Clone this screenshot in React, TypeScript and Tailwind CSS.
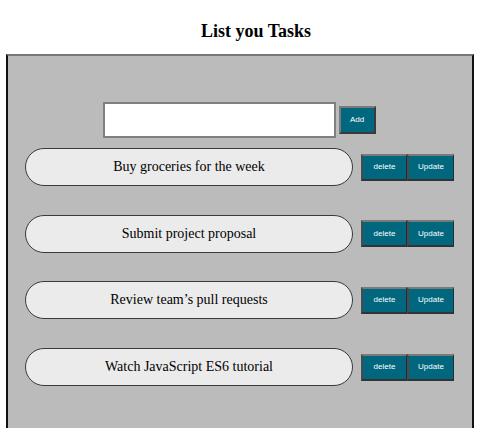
const tasks = [
  'Buy groceries for the week',
  'Submit project proposal',
  "Review team\u2019s pull requests",
  'Watch JavaScript ES6 tutorial',
]

function TaskButton({ label }: { label: string }) {
  return (
    <button className="h-[27px] bg-[#00677e] text-white text-[8px] font-['Liberation_Sans',Arial,sans-serif] border-t-2 border-l-2 border-t-[#7a7a7a] border-l-[#4a4a4a] border-r border-b-2 border-r-[#1f2f33] border-b-[#333333]">
      {label}
    </button>
  )
}

export default function App() {
  return (
    <div className="min-h-screen bg-white font-['Liberation_Serif','Times_New_Roman',serif] text-black">
      {/* Header */}
      <h1 className="pt-[20px] pl-8 h-[54px] text-center text-[18px] font-bold leading-[22px]">
        List you Tasks
      </h1>

      {/* Panel */}
      <div className="mx-[6px] w-[468px] h-[380px] bg-[#bbbbbb] border-t-2 border-t-[#777777] border-x-2 border-x-[#111111]">
        <div className="pt-[46px] flex justify-center items-center gap-[3px] pr-[2px]">
          <input className="w-[233px] h-[36px] bg-white border-2 border-[#808080] outline-none" />
          <button className="w-[37px] h-[28px] bg-[#00677e] text-white text-[8px] font-['Liberation_Sans',Arial,sans-serif] border-t-2 border-l-2 border-t-[#7a7a7a] border-l-[#7a7a7a] border-r-2 border-b-2 border-r-[#3a3a3a] border-b-[#3a3a3a]">
            Add
          </button>
        </div>

        <div className="mt-[10px] flex flex-col gap-[28.7px]">
          {tasks.map((task) => (
            <div key={task} className="flex items-center pl-[17px]">
              <div className="w-[328px] h-[38px] rounded-full bg-[#ebebeb] border border-[#3a3a3a] flex items-center justify-center text-[14px] leading-none">
                {task}
              </div>
              <div className="ml-[8px] grid grid-cols-[46px_47px]">
                <TaskButton label="delete" />
                <TaskButton label="Update" />
              </div>
            </div>
          ))}
        </div>
      </div>
    </div>
  )
}
